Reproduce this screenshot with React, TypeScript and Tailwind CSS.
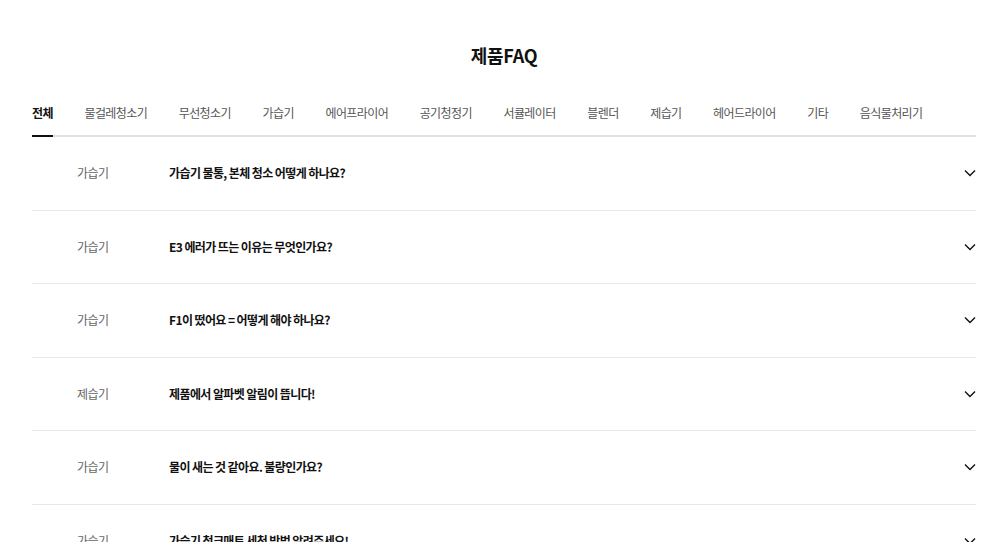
const tabs = [
  '전체',
  '물걸레청소기',
  '무선청소기',
  '가습기',
  '에어프라이어',
  '공기청정기',
  '서큘레이터',
  '블렌더',
  '제습기',
  '헤어드라이어',
  '기타',
  '음식물처리기',
]

const faqs = [
  { category: '가습기', question: '가습기 물통, 본체 청소 어떻게 하나요?' },
  { category: '가습기', question: 'E3 에러가 뜨는 이유는 무엇인가요?' },
  { category: '가습기', question: 'F1이 떴어요 = 어떻게 해야 하나요?' },
  { category: '제습기', question: '제품에서 알파벳 알림이 뜹니다!' },
  { category: '가습기', question: '물이 새는 것 같아요. 불량인가요?' },
  { category: '가습기', question: '가습기 청크매트 세척 방법 알려주세요!' },
]

function Chevron() {
  return (
    <svg width="12" height="8" viewBox="0 0 12 8" fill="none" className="shrink-0">
      <path d="M1 1.5L6 6.5L11 1.5" stroke="#111" strokeWidth="1.4" />
    </svg>
  )
}

export default function App() {
  return (
    <div
      className="min-h-screen bg-white text-[#111]"
      style={{ fontFamily: '"Noto Sans CJK KR", "Noto Sans", sans-serif' }}
    >
      <div className="ml-[32px] w-[944px] pt-[41px]">
        <h1 className="text-center text-[18px] font-bold leading-[28px] tracking-[-0.3px]">제품FAQ</h1>

        {/* Tabs */}
        <div className="mt-[35px] flex border-b-2 border-[#e2e2e2]">
          {tabs.map((t, i) => (
            <button
              key={t}
              className={`-mb-[2px] mr-[31.6px] shrink-0 whitespace-nowrap pb-[13px] text-[12px] leading-[18px] tracking-[-0.6px] ${
                i === 0 ? 'border-b-2 border-[#111] font-bold text-[#111]' : 'border-b-2 border-transparent text-[#555]'
              }`}
            >
              {t}
            </button>
          ))}
        </div>

        {/* List */}
        <ul>
          {faqs.map((f, i) => (
            <li key={i} className="flex h-[73.5px] items-center border-b border-[#e8e8e8]">
              <span className="w-[137px] shrink-0 pl-[45px] text-[12px] tracking-[-0.6px] text-[#666]">{f.category}</span>
              <span className="flex-1 text-[12px] font-bold tracking-[-0.6px] text-[#111]">{f.question}</span>
              <Chevron />
            </li>
          ))}
        </ul>
      </div>
    </div>
  )
}
